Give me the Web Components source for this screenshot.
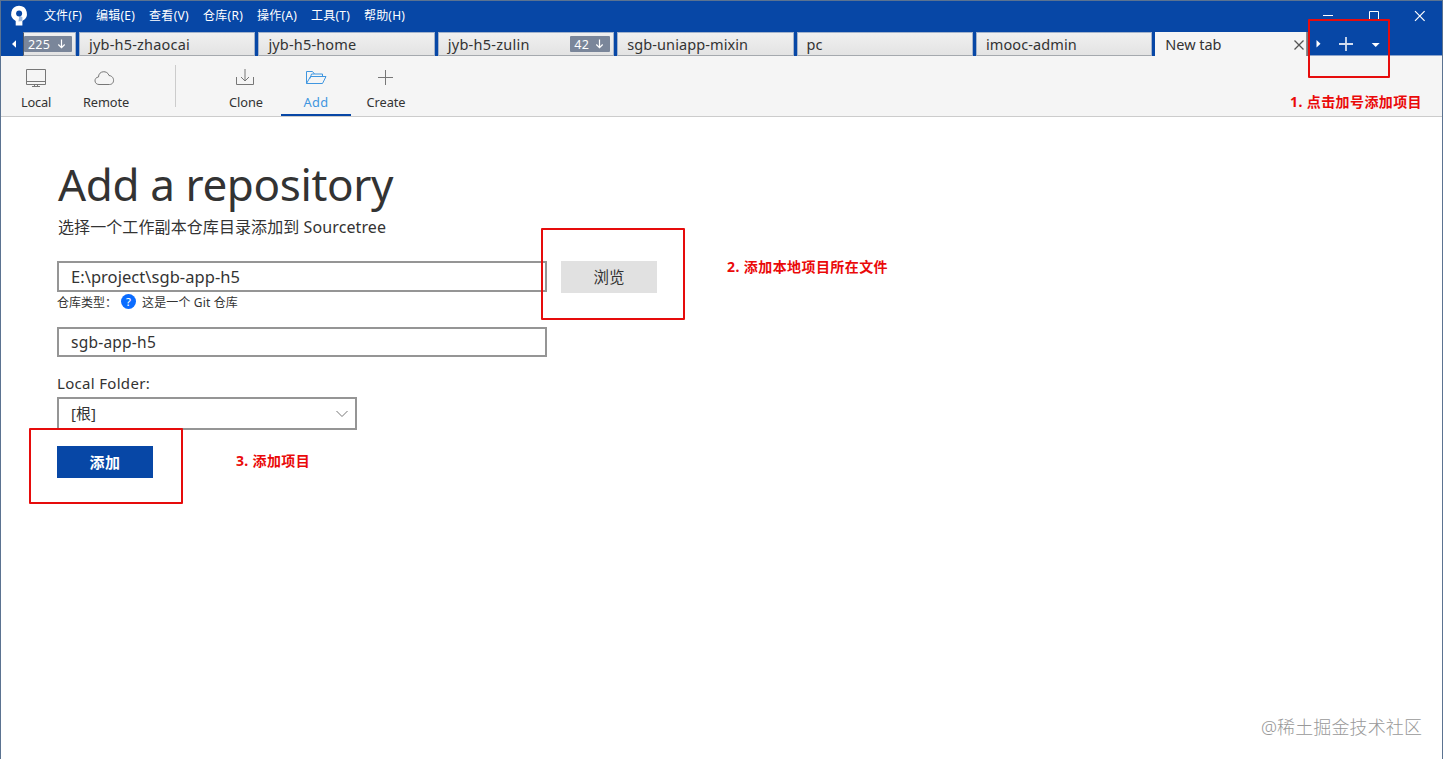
<!DOCTYPE html>
<html lang="zh-CN">
<head>
<meta charset="utf-8">
<title>Sourcetree</title>
<style>
  body {
    margin: 0;
    width: 1443px;
    height: 759px;
    overflow: hidden;
    font-family: "Noto Sans", "Noto Sans CJK SC", sans-serif;
    color: #333;
    background: #fff;
  }
</style>
</head>
<body>
<source-tree></source-tree>

<script>
// Text run that is tracked out (or in) to a given width
class FitText extends HTMLElement {
  connectedCallback() {
    this.attachShadow({ mode: 'open' }).innerHTML =
      '<style>:host { display: inline-block; white-space: nowrap; flex: none; }</style><span><slot></slot></span>';
    const span = this.shadowRoot.querySelector('span');
    const width = Number(this.getAttribute('width'));
    const natural = span.getBoundingClientRect().width;
    const count = this.textContent.length;
    this.style.letterSpacing = `${(width - natural) / count}px`;
  }
}

class MenuBar extends HTMLElement {
  constructor() {
    super();
    // label, text width, distance to the next label
    const items = [
      ['文件(F)', 38, 52],
      ['编辑(E)', 39, 53],
      ['查看(V)', 40, 54],
      ['仓库(R)', 40, 54],
      ['操作(A)', 40, 54],
      ['工具(T)', 39, 53],
      ['帮助(H)', 41, 53]
    ];
    this.attachShadow({ mode: 'open' }).innerHTML = `
      <style>
        :host {
          display: flex;
          height: 31px;
          color: #fff;
          font-size: 12px;
          line-height: 30px;
        }
        .logo { width: 43px; }
        .buttons { margin-left: auto; width: 138px; }
        svg { display: block; }
      </style>
      <div class="logo">
        <svg width="43" height="31" viewBox="1 1 43 31">
          <path d="M19 5.7a8 8 0 0 0-3.3 15.2V25.5h6.7v-4.6A8 8 0 0 0 19 5.7z" fill="#fff"/>
          <path d="M22.4 20.9V17l-3-1.2-1 5.8z" fill="#9eb9df"/>
          <circle cx="19.1" cy="13.6" r="3" fill="#0747a6"/>
        </svg>
      </div>
      ${items.map(([text, w, step]) => `<div style="width:${step}px"><fit-text width="${w}">${text}</fit-text></div>`).join('')}
      <div class="buttons">
        <svg width="138" height="31" viewBox="1304 1 138 31" fill="none" stroke="#fff">
          <path d="M1323 15.5h10"/>
          <path d="M1369.5 11.5h9v9h-9z"/>
          <path d="M1415 11.2l9.6 9.6M1424.6 11.2l-9.6 9.6" stroke-width="1.2"/>
        </svg>
      </div>
    `;
  }
}

class CountBadge extends HTMLElement {
  constructor() {
    super();
    this.attachShadow({ mode: 'open' }).innerHTML = `
      <style>
        :host {
          display: flex;
          box-sizing: border-box;
          align-items: center;
          justify-content: space-between;
          height: 16px;
          padding: 0 6px 0 4px;
          border-radius: 1px;
          background: #7a869a;
          color: #fff;
          font-size: 12.5px;
          line-height: 17px;
        }
      </style>
      <slot></slot>
      <svg width="9" height="10" viewBox="0 0 9 10" fill="none" stroke="#fff" stroke-width="1.2">
        <path d="M4.5 .5v8M1.3 5.5l3.2 3.2 3.2-3.2"/>
      </svg>
    `;
  }
}

class RepoTab extends HTMLElement {
  constructor() {
    super();
    this.attachShadow({ mode: 'open' }).innerHTML = `
      <style>
        :host {
          display: flex;
          box-sizing: border-box;
          flex: none;
          align-items: center;
          width: 176.4px;
          height: 24px;
          margin-right: 3px;
          padding: 0 3px 0 9px;
          border: 1px solid #a3b3cc;
          border-bottom-color: #a5a9ae;
          background: linear-gradient(#f0f0f0, #e3e3e3);
          font-size: 14.5px;
          line-height: 24px;
        }
        :host([first]) { width: 53px; padding: 0 3px 0 0; border-left-color: #4c5768; }
        :host([active]) {
          width: 154px;
          height: 25px;
          margin: 0;
          padding: 0 4px 0 10px;
          border: 0;
          background: #f5f5f5;
          line-height: 22px;
        }
      </style>
      <slot></slot>
    `;
  }
}

class TabStrip extends HTMLElement {
  constructor() {
    super();
    this.attachShadow({ mode: 'open' }).innerHTML = `
      <style>
        :host { display: flex; height: 24px; }
        .prev { width: 22px; flex: none; }
        svg { display: block; }
        count-badge { width: 40px; margin-left: auto; }
        repo-tab[first] count-badge { width: 48px; margin: 0; }
        repo-tab[active] fit-text { margin-bottom: 2px; }
        .close { margin-left: auto; }
        .controls { flex: 1; border-bottom: 1px solid #8ca4cc; height: 23px; }
        .edge { width: 3px; height: 24px; background: linear-gradient(90deg, #999, #4c5768); margin-left: -3px; }
      </style>
      <div class="prev">
        <svg width="22" height="24"><path d="M15 8.3v7.4L11 12z" fill="#fff"/></svg>
      </div>
      <repo-tab first><count-badge><fit-text width="22">225</fit-text></count-badge></repo-tab>
      <repo-tab><fit-text width="101">jyb-h5-zhaocai</fit-text></repo-tab>
      <repo-tab><fit-text width="88">jyb-h5-home</fit-text></repo-tab>
      <repo-tab><fit-text width="82">jyb-h5-zulin</fit-text><count-badge><fit-text width="15">42</fit-text></count-badge></repo-tab>
      <repo-tab><fit-text width="121">sgb-uniapp-mixin</fit-text></repo-tab>
      <repo-tab><fit-text width="16">pc</fit-text></repo-tab>
      <repo-tab><fit-text width="91">imooc-admin</fit-text></repo-tab>
      <repo-tab active>
        <fit-text width="56">New tab</fit-text>
        <svg class="close" width="12" height="12" stroke="#555" stroke-width="1.3"><path d="M1.5 1.5l9 9M10.5 1.5l-9 9"/></svg>
      </repo-tab>
      <div class="edge"></div>
      <div class="controls">
        <svg width="132" height="23" viewBox="1309 32 132 23">
          <path d="M1316.5 40v7.4l4-3.7z" fill="#fff"/>
          <path d="M1339 44h14M1346 37v14" stroke="#d3def0" stroke-width="1.8"/>
          <path d="M1371.7 43h8l-4 4z" fill="#fff"/>
        </svg>
      </div>
    `;
  }
}

const icons = {
  local: '<path d="M8.5 8.5h19v15h-19zM8.5 20.5h19M16.5 23.5v2h3v-2M14 25.5h8"/>',
  remote: '<path d="M12 23.5c-5 0-5.5-7-.5-7.500 0-6.500 9-7 10.500-1.500 6 .5 6 9 .5 9z" transform="translate(-1 0)"/>',
  clone: '<path d="M8.5 16v7.5h17V16M17 8v12M13 16l4 4 4-4"/>',
  add: '<path d="M8.5 22.500V10.500h6l2 2.500h8v2.500M8.500 22.500l4-7h15.500l-3.500 7zM12 17.500l1.500-4.500h3"/>',
  create: '<path d="M10 16.5h15M17.5 9v15"/>'
};

class ToolButton extends HTMLElement {
  connectedCallback() {
    const icon = this.getAttribute('icon');
    this.attachShadow({ mode: 'open' }).innerHTML = `
      <style>
        :host {
          display: flex;
          box-sizing: border-box;
          flex-direction: column;
          align-items: center;
          width: 70px;
          height: 60px;
          padding-top: 5px;
          font-size: 12.8px;
          line-height: 18px;
        }
        :host([active]) { color: #3f96e0; border-bottom: 2px solid #0747a6; }
        svg { display: block; fill: none; stroke: #777; margin-bottom: 3px; flex: none; }
        :host([active]) svg { stroke: #3f96e0; }
      </style>
      <svg width="36" height="29" viewBox="0 0 36 29">${icons[icon]}</svg>
      <slot></slot>
    `;
  }
}

class ToolBar extends HTMLElement {
  constructor() {
    super();
    this.attachShadow({ mode: 'open' }).innerHTML = `
      <style>
        :host {
          display: flex;
          height: 60px;
          border-bottom: 1px solid #ccc;
          background: #f5f5f5;
        }
        .line { width: 1px; height: 42px; margin: 9px 35px 0 34px; background: #ccc; }
      </style>
      <tool-button icon="local"><fit-text width="30">Local</fit-text></tool-button>
      <tool-button icon="remote"><fit-text width="46">Remote</fit-text></tool-button>
      <div class="line"></div>
      <tool-button icon="clone"><fit-text width="34">Clone</fit-text></tool-button>
      <tool-button icon="add" active><fit-text width="25">Add</fit-text></tool-button>
      <tool-button icon="create"><fit-text width="39">Create</fit-text></tool-button>
    `;
  }
}

class TextField extends HTMLElement {
  constructor() {
    super();
    this.attachShadow({ mode: 'open' }).innerHTML = `
      <style>
        :host {
          display: flex;
          box-sizing: border-box;
          align-items: center;
          justify-content: space-between;
          width: 490px;
          height: 31px;
          padding: 0 7px 0 12px;
          border: 2px solid #959595;
          background: #fff;
          line-height: 24px;
        }
      </style>
      <slot></slot>
    `;
  }
}

class PushButton extends HTMLElement {
  constructor() {
    super();
    this.attachShadow({ mode: 'open' }).innerHTML = `
      <style>
        :host {
          display: flex;
          align-items: center;
          justify-content: center;
          width: 96px;
          height: 32px;
          background: #e1e1e1;
          font-size: 15.5px;
          line-height: 25px;
        }
        :host([primary]) { background: #0747a6; color: #fff; font-size: 15px; font-weight: bold; }
      </style>
      <slot></slot>
    `;
  }
}

class AddRepository extends HTMLElement {
  constructor() {
    super();
    this.attachShadow({ mode: 'open' }).innerHTML = `
      <style>
        :host { display: block; padding: 36px 56px 0; }
        h1 { margin: 0; padding-left: 1px; font-size: 44px; font-weight: normal; line-height: 62px; height: 64px; }
        .sub { height: 44px; padding-left: 1px; font-size: 16px; line-height: 20px; }
        .row { display: flex; gap: 14px; height: 32px; }
        .type { display: flex; align-items: center; height: 18px; font-size: 12px; line-height: 16px; }
        .type fit-text { padding-top: 2px; }
        .path { font-size: 16.5px; }
        .name { height: 30px; margin-top: 16px; font-size: 15.5px; }
        .label { height: 22px; margin-top: 15px; font-size: 15px; line-height: 23px; }
        .folder { width: 300px; height: 33px; margin: 3px 0 16px; font-size: 15px; line-height: 22px; }
        .folder fit-text { margin-bottom: 2px; }
        .q {
          width: 15px;
          height: 15px;
          margin: 0 6px 1px 4px;
          border-radius: 50%;
          background: #0a6cff;
          color: #fff;
          font-size: 11px;
          font-weight: 500;
          line-height: 15px;
          text-align: center;
        }
      </style>
      <h1><fit-text width="335">Add a repository</fit-text></h1>
      <div class="sub"><fit-text width="328">选择一个工作副本仓库目录添加到 Sourcetree</fit-text></div>
      <div class="row">
        <text-field class="path"><fit-text width="169">E:\\project\\sgb-app-h5</fit-text></text-field>
        <push-button><fit-text width="31">浏览</fit-text></push-button>
      </div>
      <div class="type">
        <fit-text width="60">仓库类型：</fit-text>
        <div class="q">?</div>
        <fit-text width="96">这是一个 Git 仓库</fit-text>
      </div>
      <text-field class="name"><fit-text width="85">sgb-app-h5</fit-text></text-field>
      <div class="label"><fit-text width="93">Local Folder:</fit-text></div>
      <text-field class="folder">
        <fit-text width="25">[根]</fit-text>
        <svg width="12" height="8" fill="none" stroke="#777"><path d="M.5 1l5.5 5.5L11.5 1"/></svg>
      </text-field>
      <push-button primary><fit-text width="31">添加</fit-text></push-button>
    `;
  }
}

// Red frames and captions that lie over the window
class GuideNotes extends HTMLElement {
  constructor() {
    super();
    this.attachShadow({ mode: 'open' }).innerHTML = `
      <style>
        :host { display: block; color: #ea0a0a; font-size: 14px; font-weight: bold; line-height: 20px; }
        .box { position: absolute; box-sizing: border-box; border: 2px solid #e60c0c; border-radius: 1px; }
        .note { position: absolute; }
        .mark { position: absolute; color: #999; font-size: 18px; font-weight: 300; line-height: 26px; }
      </style>
      <div class="box" style="left:1308px;top:19px;width:82px;height:59px"></div>
      <div class="box" style="left:541px;top:228px;width:144px;height:92px"></div>
      <div class="box" style="left:29px;top:428px;width:154px;height:76px"></div>
      <div class="note" style="left:1290px;top:92px"><fit-text width="132">1. 点击加号添加项目</fit-text></div>
      <div class="note" style="left:727px;top:257px"><fit-text width="161">2. 添加本地项目所在文件</fit-text></div>
      <div class="note" style="left:236px;top:451px"><fit-text width="74">3. 添加项目</fit-text></div>
      <div class="mark" style="left:1261px;top:714px"><fit-text width="161">@稀土掘金技术社区</fit-text></div>
    `;
  }
}

class SourceTree extends HTMLElement {
  constructor() {
    super();
    this.attachShadow({ mode: 'open' }).innerHTML = `
      <style>
        :host {
          display: block;
          box-sizing: border-box;
          position: relative;
          height: 759px;
          border: 1px solid #5b7391;
          border-bottom: 0;
        }
        header { background: #0747a6; }
        guide-notes { position: absolute; left: -1px; top: -1px; }
      </style>
      <header>
        <menu-bar></menu-bar>
        <tab-strip></tab-strip>
      </header>
      <tool-bar></tool-bar>
      <add-repository></add-repository>
      <guide-notes></guide-notes>
    `;
  }
}

customElements.define('fit-text', FitText);
customElements.define('count-badge', CountBadge);
customElements.define('repo-tab', RepoTab);
customElements.define('tab-strip', TabStrip);
customElements.define('menu-bar', MenuBar);
customElements.define('tool-button', ToolButton);
customElements.define('tool-bar', ToolBar);
customElements.define('text-field', TextField);
customElements.define('push-button', PushButton);
customElements.define('add-repository', AddRepository);
customElements.define('guide-notes', GuideNotes);
customElements.define('source-tree', SourceTree);
</script>
</body>
</html>
